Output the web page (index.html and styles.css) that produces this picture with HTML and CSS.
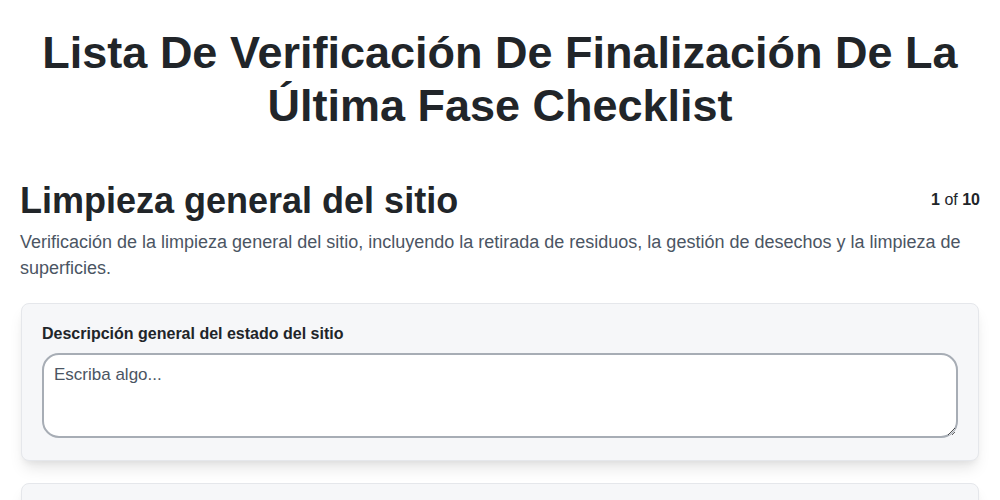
FILE: index.html
```html
<!DOCTYPE html>
<html lang="es">
<head>
<meta charset="utf-8">
<link rel="stylesheet" href="styles.css">
</head>
<body>
<main class="page">
  <h1 class="title">Lista De Verificación De Finalización De La Última Fase Checklist</h1>
  <section class="section">
    <div class="section-head">
      <h2 class="section-title">Limpieza general del sitio</h2>
      <div class="counter"><b>1</b> of <b>10</b></div>
    </div>
    <p class="section-desc">Verificación de la limpieza general del sitio, incluyendo la retirada de residuos, la gestión de desechos y la limpieza de superficies.</p>
    <div class="card">
      <label class="field-label" for="f1">Descripción general del estado del sitio</label>
      <textarea id="f1" class="field-input" placeholder="Escriba algo..."></textarea>
    </div>
    <div class="card"></div>
  </section>
</main>
</body>
</html>
```

FILE: styles.css
```css
* { box-sizing: border-box; }
html, body { margin: 0; padding: 0; background: #fff; }
body {
  font-family: "Liberation Sans", Arial, sans-serif;
  color: #212529;
}
.page {
  padding: 0 20px;
}
.title {
  margin: 0;
  padding-top: 26px;
  text-align: center;
  font-size: 45px;
  line-height: 53px;
  font-weight: 700;
  color: #212529;
}
.section {
  margin-top: 47px;
}
.section-head {
  display: flex;
  justify-content: space-between;
  align-items: flex-start;
}
.section-title {
  margin: 0;
  font-size: 36px;
  line-height: 44px;
  font-weight: 700;
}
.counter {
  font-size: 16px;
  margin-top: 12px;
  color: #212529;
}
.section-desc {
  margin: 6px 0 0;
  font-size: 18px;
  line-height: 26px;
  color: #4b5563;
}
.card {
  margin: 22px 1px 0;
  background: #f6f7f9;
  border: 1px solid #e5e7eb;
  border-radius: 8px;
  padding: 20px 20px 22px;
  box-shadow: 0 10px 15px -3px rgba(0,0,0,0.1), 0 4px 6px -2px rgba(0,0,0,0.05);
  display: flex;
  flex-direction: column;
}
.card + .card { margin-top: 22px; }
.field-label {
  font-size: 16px;
  font-weight: 700;
  line-height: 20px;
  margin-bottom: 9px;
  color: #212529;
}
.field-input {
  height: 85px;
  border: 2px solid #a7adb5;
  border-radius: 17px;
  padding: 10px 10px;
  font-family: "Liberation Sans", Arial, sans-serif;
  font-size: 17px;
  background: #fff;
  resize: vertical;
}
.field-input::placeholder { color: #4b5563; }
```
